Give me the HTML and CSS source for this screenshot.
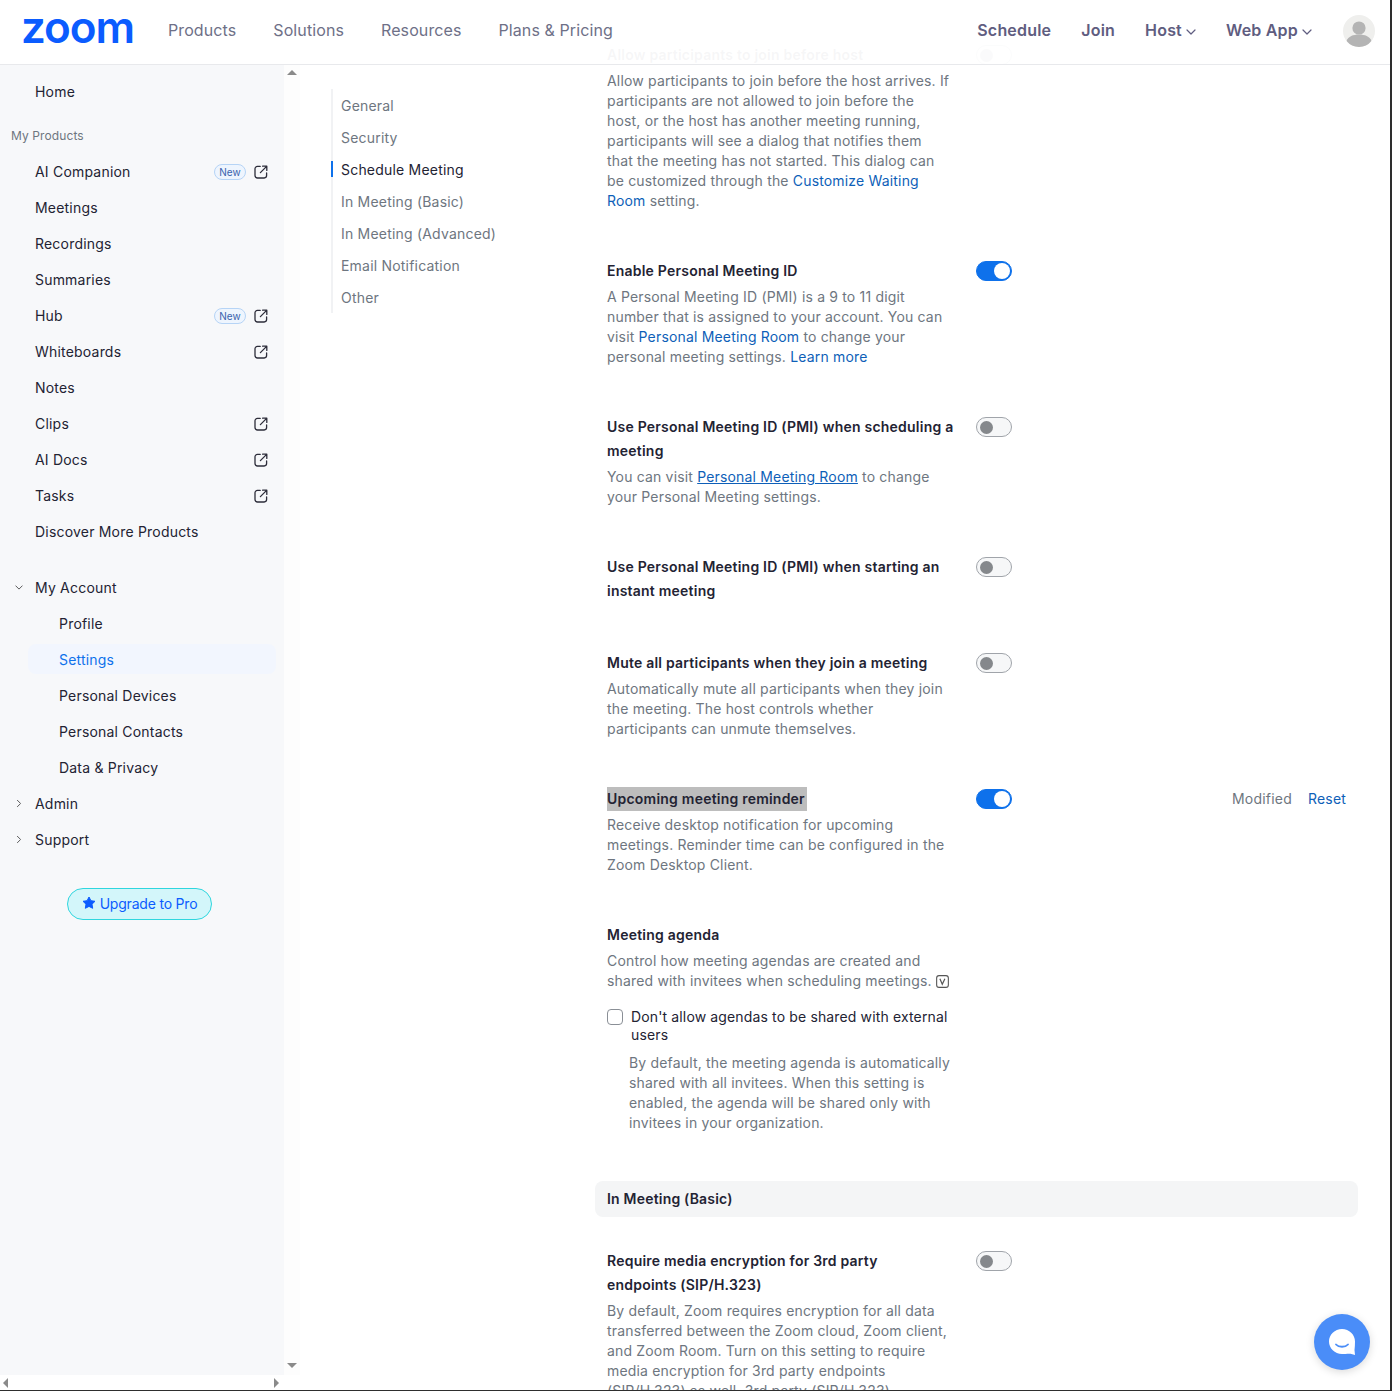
FILE: index.html
```html
<!DOCTYPE html>
<html lang="en">
<head>
  <meta charset="UTF-8" />
  <meta name="viewport" content="width=device-width, initial-scale=1.0"/>
  <title>Settings - Zoom</title>
  <link rel="stylesheet" href="styles.css">
</head>
<body>
<svg class="icon-defs" width="0" height="0">
  <symbol id="ext" viewBox="0 0 14 14">
    <path d="M6.2 1.4H3.4A2.4 2.4 0 0 0 1 3.8v6.8A2.4 2.4 0 0 0 3.4 13h6.8a2.4 2.4 0 0 0 2.4-2.4V8" fill="none" stroke="currentColor" stroke-width="1.3" stroke-linecap="round"/>
    <path d="M6.4 7.6 12.6 1.4M8.6 1.2h4.2v4.2" fill="none" stroke="currentColor" stroke-width="1.3" stroke-linecap="round" stroke-linejoin="round"/>
  </symbol>
  <symbol id="chev" viewBox="0 0 10 6">
    <path d="M1 1l4 4 4-4" fill="none" stroke="currentColor" stroke-width="1.2" stroke-linecap="round" stroke-linejoin="round"/>
  </symbol>
</svg>

<div class="page">
  <header class="topbar">
    <a class="logo">zoom</a>
    <nav class="topnav">
      <a>Products</a>
      <a>Solutions</a>
      <a>Resources</a>
      <a>Plans &amp; Pricing</a>
    </nav>
    <nav class="topnav-right">
      <a>Schedule</a>
      <a>Join</a>
      <a class="has-chev">Host <svg class="chev"><use href="#chev"/></svg></a>
      <a class="has-chev">Web App <svg class="chev"><use href="#chev"/></svg></a>
      <svg class="avatar" viewBox="0 0 32 32">
        <circle cx="16" cy="16" r="16" fill="#efefed"/>
        <circle cx="16" cy="13" r="6.6" fill="#b4b4b4"/>
        <path d="M3.6 26c1.6-4.4 6.6-6.4 12.4-6.4S26.800 21.600 28.400 26A16 16 0 0 1 16 32 16 16 0 0 1 3.600 26z" fill="#b4b4b4"/>
      </svg>
    </nav>
  </header>

  <div class="body">
    <aside class="sidebar-wrap">
      <div class="sidebar-row">
        <div class="sidebar">
          <a class="side-item">Home</a>
          <div class="side-label">My Products</div>
          <a class="side-item">AI Companion <span class="badge">New</span><svg class="ext"><use href="#ext"/></svg></a>
          <a class="side-item">Meetings</a>
          <a class="side-item">Recordings</a>
          <a class="side-item">Summaries</a>
          <a class="side-item">Hub <span class="badge">New</span><svg class="ext"><use href="#ext"/></svg></a>
          <a class="side-item">Whiteboards <svg class="ext"><use href="#ext"/></svg></a>
          <a class="side-item">Notes</a>
          <a class="side-item">Clips <svg class="ext"><use href="#ext"/></svg></a>
          <a class="side-item">AI Docs <svg class="ext"><use href="#ext"/></svg></a>
          <a class="side-item">Tasks <svg class="ext"><use href="#ext"/></svg></a>
          <a class="side-item">Discover More Products</a>

          <a class="side-item side-group"><svg class="caret"><use href="#chev"/></svg>My Account</a>
          <a class="side-item side-sub">Profile</a>
          <a class="side-item side-sub active">Settings</a>
          <a class="side-item side-sub">Personal Devices</a>
          <a class="side-item side-sub">Personal Contacts</a>
          <a class="side-item side-sub">Data &amp; Privacy</a>
          <a class="side-item"><svg class="caret closed"><use href="#chev"/></svg>Admin</a>
          <a class="side-item"><svg class="caret closed"><use href="#chev"/></svg>Support</a>

          <a class="upgrade">
            <svg class="star" viewBox="0 0 14 14"><path d="M7 1l1.900 3.700 4.100.6-3 2.900.7 4.100L7 10.400l-3.700 1.900.7-4.100-3-2.900 4.100-.6z" fill="#0b5cff" stroke="#0b5cff" stroke-width="1" stroke-linejoin="round"/></svg>
            Upgrade to Pro
          </a>
        </div>
        <div class="vscroll">
          <span class="arrow up"></span>
          <span class="arrow down"></span>
        </div>
      </div>
      <div class="hscroll">
        <span class="arrow left"></span>
        <span class="arrow right"></span>
      </div>
    </aside>

    <nav class="tabs">
      <a>General</a>
      <a>Security</a>
      <a class="active">Schedule Meeting</a>
      <a>In Meeting (Basic)</a>
      <a>In Meeting (Advanced)</a>
      <a>Email Notification</a>
      <a>Other</a>
    </nav>

    <main class="settings">
      <section class="row">
        <div class="row-text">
          <h3>Allow participants to join before host</h3>
          <p>Allow participants to join before the host arrives. If participants are not allowed to join before the host, or the host has another meeting running, participants will see a dialog that notifies them that the meeting has not started. This dialog can be customized through the <a>Customize Waiting Room</a> setting.</p>
        </div>
        <span class="toggle"></span>
      </section>

      <section class="row">
        <div class="row-text">
          <h3>Enable Personal Meeting ID</h3>
          <p>A Personal Meeting ID (PMI) is a 9 to 11 digit number that is assigned to your account. You can visit <a>Personal Meeting Room</a> to change your personal meeting settings. <a>Learn more</a></p>
        </div>
        <span class="toggle on"></span>
      </section>

      <section class="row">
        <div class="row-text">
          <h3>Use Personal Meeting ID (PMI) when scheduling a<br>meeting</h3>
          <p>You can visit <a class="under">Personal Meeting Room</a> to change your Personal Meeting settings.</p>
        </div>
        <span class="toggle"></span>
      </section>

      <section class="row">
        <div class="row-text">
          <h3>Use Personal Meeting ID (PMI) when starting an<br>instant meeting</h3>
        </div>
        <span class="toggle"></span>
      </section>

      <section class="row">
        <div class="row-text">
          <h3>Mute all participants when they join a meeting</h3>
          <p>Automatically mute all participants when they join the meeting. The host controls whether participants can unmute themselves.</p>
        </div>
        <span class="toggle"></span>
      </section>

      <section class="row">
        <div class="row-text">
          <h3><mark>Upcoming meeting reminder</mark></h3>
          <p>Receive desktop notification for upcoming meetings. Reminder time can be configured in the Zoom Desktop Client.</p>
        </div>
        <span class="toggle on"></span>
        <div class="row-status"><span>Modified</span><a>Reset</a></div>
      </section>

      <section class="row">
        <div class="row-text">
          <h3>Meeting agenda</h3>
          <p>Control how meeting agendas are created and shared with invitees when scheduling meetings. <svg class="v-icon" viewBox="0 0 12 12"><rect x="0.600" y="0.600" width="10.800" height="10.800" rx="2.200" fill="none" stroke="#555" stroke-width="1"/><path d="M3.600 3.400 5.800 8.600 8.200 3.400" fill="none" stroke="#555" stroke-width="1.100"/></svg></p>
          <label class="check"><span class="box"></span>Don't allow agendas to be shared with external users</label>
          <p class="check-note">By default, the meeting agenda is automatically shared with all invitees. When this setting is enabled, the agenda will be shared only with invitees in your organization.</p>
        </div>
      </section>

      <h2 class="section-bar">In Meeting (Basic)</h2>

      <section class="row">
        <div class="row-text">
          <h3>Require media encryption for 3rd party<br>endpoints (SIP/H.323)</h3>
          <p>By default, Zoom requires encryption for all data transferred between the Zoom cloud, Zoom client, and Zoom Room. Turn on this setting to require media encryption for 3rd party endpoints (SIP/H.323) as well. 3rd party (SIP/H.323) endpoints</p>
        </div>
        <span class="toggle"></span>
      </section>
    </main>
  </div>

  <a class="chat">
    <svg viewBox="0 0 28 28" width="28" height="28">
      <path d="M14 1C6.800 1 1 6.600 1 13.500S6.800 26 14 26c3 0 6.500-.5 8.500-.2l4.500 1.200-.500-5c.300-2.500.500-5.500.500-8.500C27 6.600 21.200 1 14 1z" fill="#fff"/>
      <path d="M8 16.500c2.800 3 9.200 3 12 0" fill="none" stroke="#4a8df8" stroke-width="1.800" stroke-linecap="round"/>
    </svg>
  </a>
</div>
</body>
</html>
```

FILE: styles.css
```css
* { box-sizing: border-box; }

html, body {
  margin: 0;
  height: 100%;
  overflow: hidden;
}

body {
  font-family: Inter, "Noto Sans", sans-serif;
  font-size: 14px;
  letter-spacing: 0.2px;
  color: #232333;
  background: #fff;
}

.icon-defs { position: absolute; }

.page {
  position: relative;
  display: flex;
  flex-direction: column;
  height: 1391px;
  overflow: hidden;
  border-right: 2px solid #2e2e2e;
  border-bottom: 1px solid #2e2e2e;
}

/* top bar */
.topbar {
  position: relative;
  z-index: 2;
  flex: none;
  display: flex;
  align-items: center;
  height: 65px;
  padding: 0 15px 4px 21px;
  background: rgba(255, 255, 255, 0.96);
  border-bottom: 1px solid #e8e9ec;
}

.logo {
  width: 111px;
  margin-right: 36px;
  font-size: 44px;
  font-weight: 600;
  line-height: 44px;
  letter-spacing: -1.1px;
  color: #0b5cff;
  padding-bottom: 6px;
}

.topnav {
  display: flex;
  gap: 37px;
  font-size: 16px;
  letter-spacing: 0.1px;
  color: #6e7087;
}

.topnav-right {
  display: flex;
  align-items: center;
  margin-left: auto;
  gap: 30px;
  font-size: 16px;
  font-weight: 600;
  color: #5f5d80;
}

.has-chev {
  display: flex;
  align-items: center;
  gap: 4px;
}

.chev {
  width: 10px;
  height: 6px;
  margin-top: 3px;
}

.avatar {
  width: 32px;
  height: 32px;
  margin: 2px 0 0 1px;
}

/* page body */
.body {
  flex: 1;
  display: flex;
  min-height: 0;
}

.sidebar-wrap {
  flex: none;
  display: flex;
  flex-direction: column;
  width: 300px;
}

.sidebar-row {
  flex: 1;
  display: flex;
  min-height: 0;
}

.sidebar {
  width: 284px;
  padding-top: 8px;
  background: #f7f8fa;
}

.side-item {
  position: relative;
  display: flex;
  align-items: center;
  height: 36px;
  padding: 0 16px 0 35px;
  color: #232333;
}

.side-label {
  display: flex;
  align-items: center;
  height: 16px;
  margin: 18px 0 10px 11px;
  font-size: 12px;
  letter-spacing: 0.1px;
  color: #6e7680;
}

.side-group { margin-top: 20px; }

.side-sub { padding-left: 59px; }

.side-sub.active {
  height: 30px;
  margin: 3px 8px 3px 28px;
  padding-left: 31px;
  color: #0e71eb;
  background: #f2f6fe;
  border-radius: 8px;
}

.badge {
  position: absolute;
  left: 214px;
  width: 32px;
  height: 16px;
  margin-top: 1px;
  font-size: 10px;
  line-height: 14px;
  letter-spacing: 0;
  text-align: center;
  color: #3a62ad;
  background: #eef5fe;
  border: 1px solid #b6d4f6;
  border-radius: 8px;
}

.ext {
  position: absolute;
  left: 254px;
  width: 14px;
  height: 14px;
  margin-top: 1px;
  color: #2d2d3a;
}

.caret {
  position: absolute;
  left: 15px;
  width: 8px;
  height: 5px;
  color: #555;
}

.caret.closed { transform: rotate(-90deg); }

.upgrade {
  display: flex;
  align-items: center;
  justify-content: center;
  gap: 4px;
  width: 145px;
  height: 32px;
  margin: 31px 0 0 67px;
  padding-bottom: 2px;
  letter-spacing: -0.2px;
  color: #0b5cff;
  background: #d3f6fa;
  border: 1px solid #2fd6de;
  border-radius: 16px;
}

.star {
  width: 14px;
  height: 14px;
}

/* fake browser scrollbars */
.vscroll {
  display: flex;
  flex-direction: column;
  justify-content: space-between;
  align-items: center;
  width: 16px;
  padding: 5px 0 7px;
  background: #fdfdfd;
}

.hscroll {
  flex: none;
  display: flex;
  justify-content: space-between;
  align-items: center;
  width: 284px;
  height: 15px;
  padding: 0 5px 0 3px;
}

.arrow {
  width: 0;
  height: 0;
  border-style: solid;
  border-color: transparent;
}

.arrow.up { border-width: 0 5px 5px; border-bottom-color: #8a8a8a; }
.arrow.down { border-width: 5px 5px 0; border-top-color: #8a8a8a; }
.arrow.left { border-width: 5px 5px 5px 0; border-right-color: #8a8a8a; }
.arrow.right { border-width: 5px 0 5px 5px; border-left-color: #8a8a8a; }

/* settings tabs */
.tabs {
  flex: none;
  align-self: flex-start;
  display: flex;
  flex-direction: column;
  width: 276px;
  margin: 24px 0 0 31px;
  border-left: 2px solid #f1f2f4;
}

.tabs a {
  position: relative;
  display: flex;
  align-items: center;
  height: 32px;
  padding-left: 8px;
  color: #6e7680;
}

.tabs a.active { color: #232333; }

.tabs a.active::before {
  content: "";
  position: absolute;
  left: -2px;
  top: 8px;
  width: 2px;
  height: 16px;
  background: #0e71eb;
}

/* settings list */
.settings {
  flex: 1;
  min-width: 0;
  margin-top: -22px;
}

.row {
  display: flex;
  align-items: flex-start;
  padding-bottom: 48px;
}

.row-text { width: 345px; }

.row h3 {
  margin: 0 0 4px;
  font-size: 14px;
  font-weight: 600;
  line-height: 24px;
  letter-spacing: 0.22px;
  white-space: nowrap;
  color: #232333;
}

.row h3:last-child { margin-bottom: 0; }

.row h3 mark {
  display: inline-block;
  padding-right: 2px;
  color: inherit;
  background: #bdbdbd;
}

.row p {
  width: 343.500px;
  margin: 0;
  line-height: 20px;
  letter-spacing: 0.17px;
  color: #6e7680;
}

.row p a { color: #0e5fb8; }

.row p a.under { text-decoration: underline; }

.toggle {
  position: relative;
  flex: none;
  width: 36px;
  height: 20px;
  margin: 2px 0 0 24px;
  background: #f6f7f8;
  border: 1px solid #a0a4aa;
  border-radius: 10px;
}

.toggle::after {
  content: "";
  position: absolute;
  left: 3px;
  top: 2.5px;
  width: 13px;
  height: 13px;
  background: #85888c;
  border-radius: 50%;
}

.toggle.on {
  background: #0e71eb;
  border-color: #0e71eb;
}

.toggle.on::after {
  left: 17px;
  top: 1px;
  width: 16px;
  height: 16px;
  background: #fff;
}

.row-status {
  display: flex;
  gap: 16px;
  margin: 2px 0 0 220px;
  line-height: 20px;
  color: #6e7680;
}

.row-status a { color: #0e5fb8; }

.v-icon {
  width: 13px;
  height: 13px;
  vertical-align: -2px;
}

.check {
  position: relative;
  display: block;
  margin-top: 17px;
  padding-left: 24px;
  line-height: 18px;
  letter-spacing: 0.14px;
  color: #232333;
}

.box {
  position: absolute;
  left: 0;
  top: 1px;
  width: 16px;
  height: 16px;
  background: #fff;
  border: 1px solid #8a8f96;
  border-radius: 4px;
}

.row p.check-note {
  width: 325px;
  margin: 9px 0 0 22px;
}

.section-bar {
  width: 763px;
  height: 36px;
  margin: 0 0 32px -12px;
  padding-left: 12px;
  font-size: 14px;
  font-weight: 600;
  line-height: 36px;
  color: #232333;
  background: #f4f5f6;
  border-radius: 8px;
}

/* chat bubble */
.chat {
  position: absolute;
  right: 20px;
  bottom: 20px;
  display: flex;
  align-items: center;
  justify-content: center;
  width: 56px;
  height: 56px;
  background: #4a8df8;
  border-radius: 50%;
  box-shadow: 0 2px 8px rgba(0, 0, 0, 0.15);
}
```
